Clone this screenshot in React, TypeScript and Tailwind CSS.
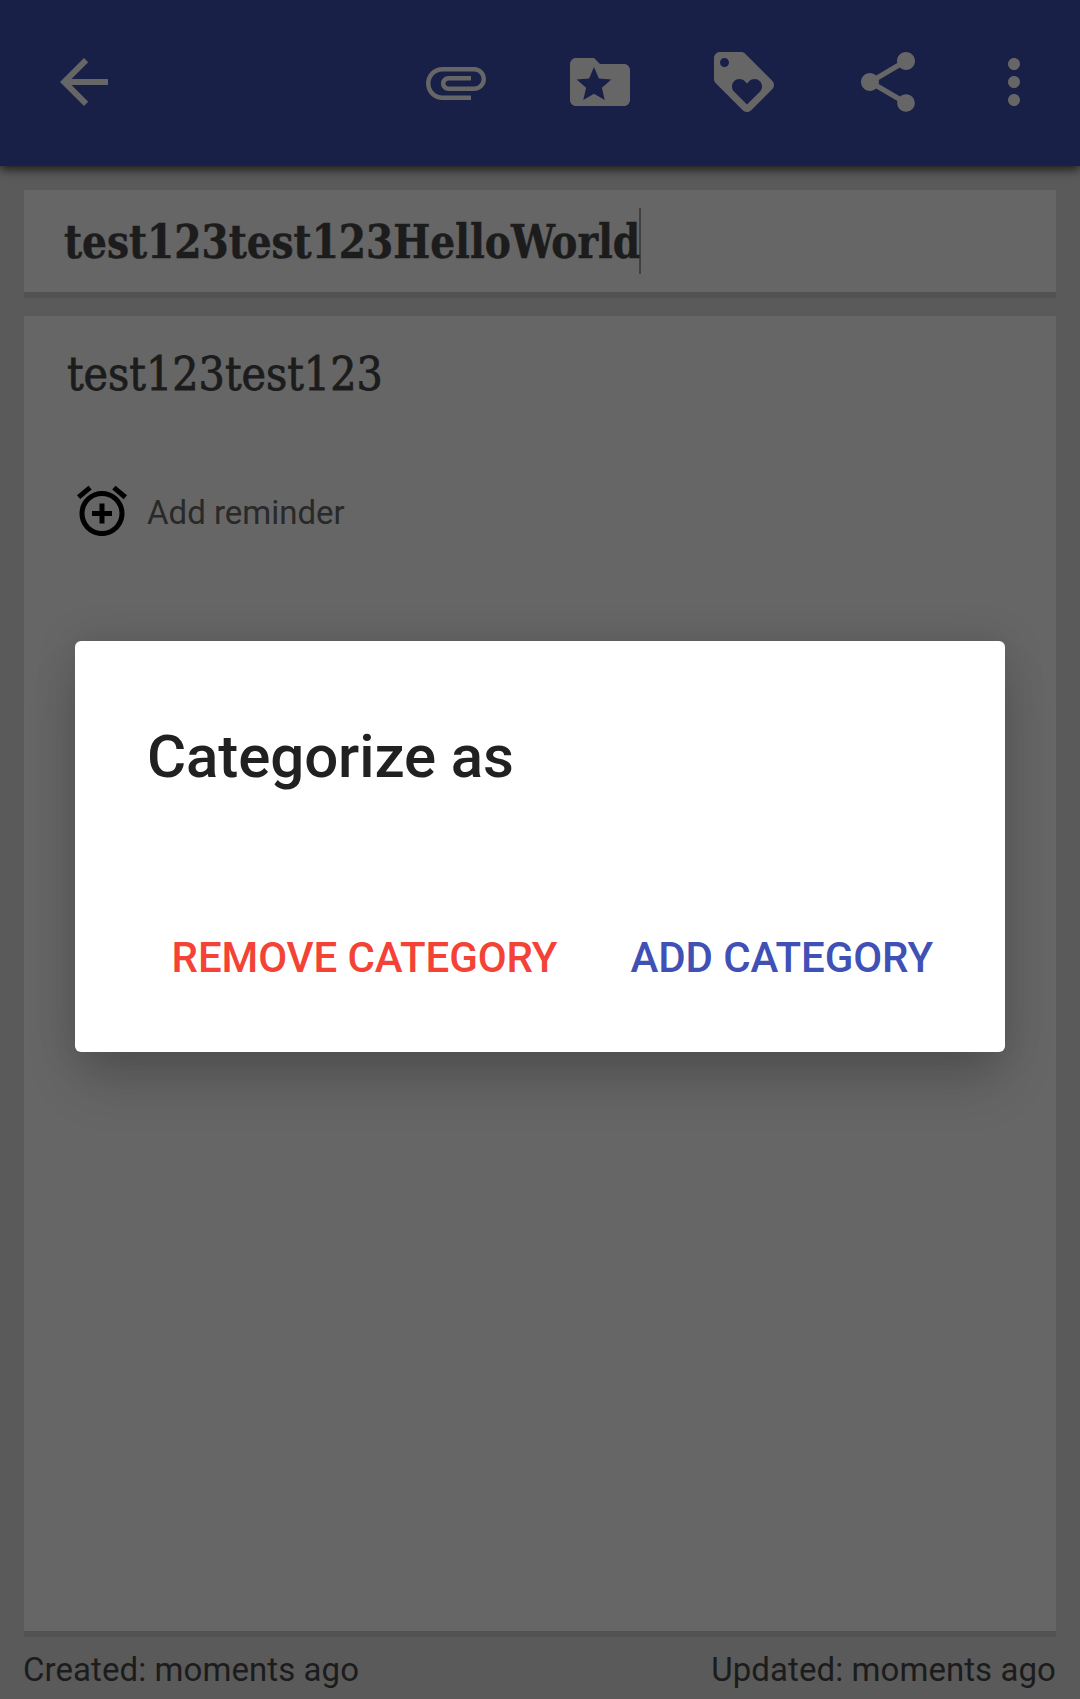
import type { ReactNode } from "react";

function Icon({ d, className }: { d: string; className: string }) {
  return (
    <svg viewBox="0 0 24 24" fill="currentColor" className={className} aria-hidden="true">
      <path d={d} />
    </svg>
  );
}

const icons = {
  back: "M20 11H7.83l5.59-5.59L12 4l-8 8 8 8 1.41-1.41L7.83 13H20v-2z",
  attachment:
    "M7.5 18C4.46 18 2 15.54 2 12.5S4.46 7 7.5 7H18c2.21 0 4 1.79 4 4s-1.79 4-4 4H9.5C8.12 15 7 13.88 7 12.5S8.12 10 9.5 10H17v1.5H9.5c-.55 0-1 .45-1 1s.45 1 1 1H18c1.38 0 2.5-1.12 2.5-2.5S19.38 8.5 18 8.5H7.5c-2.21 0-4 1.79-4 4s1.79 4 4 4H17V18H7.5z",
  folder:
    "M20 6h-8l-2-2H4c-1.1 0-1.99.9-1.99 2L2 18c0 1.1.9 2 2 2h16c1.1 0 2-.9 2-2V8c0-1.1-.9-2-2-2zm-6.42 12L10 15.9 6.42 18l.95-4.07-3.16-2.74 4.16-.36L10 7l1.63 3.84 4.16.36-3.16 2.74.95 4.06z",
  loyalty:
    "M21.41 11.58l-9-9C12.05 2.22 11.55 2 11 2H4c-1.1 0-2 .9-2 2v7c0 .55.22 1.05.59 1.42l9 9c.36.36.86.58 1.41.58.55 0 1.05-.22 1.41-.59l7-7c.37-.36.59-.86.59-1.41 0-.55-.23-1.06-.59-1.42zM5.5 7C4.67 7 4 6.33 4 5.5S4.67 4 5.5 4 7 4.67 7 5.5 6.33 7 5.5 7zm11.77 8.27L13 19.54l-4.27-4.27C8.28 14.81 8 14.19 8 13.5c0-1.38 1.12-2.5 2.5-2.5.69 0 1.32.28 1.77.74l.73.72.73-.73c.45-.45 1.08-.73 1.77-.73 1.38 0 2.5 1.12 2.5 2.5 0 .69-.28 1.32-.73 1.77z",
  share:
    "M18 16.08c-.76 0-1.44.3-1.96.77L8.91 12.7c.05-.23.09-.46.09-.7s-.04-.47-.09-.7l7.05-4.11c.54.5 1.25.81 2.04.81 1.66 0 3-1.34 3-3s-1.34-3-3-3-3 1.34-3 3c0 .24.04.47.09.7L8.04 9.81C7.5 9.31 6.79 9 6 9c-1.66 0-3 1.34-3 3s1.34 3 3 3c.79 0 1.5-.31 2.04-.81l7.12 4.16c-.05.21-.08.43-.08.65 0 1.61 1.31 2.92 2.92 2.92 1.61 0 2.92-1.31 2.92-2.92s-1.31-2.92-2.92-2.92z",
  more: "M12 8c1.1 0 2-.9 2-2s-.9-2-2-2-2 .9-2 2 .9 2 2 2zm0 2c-1.1 0-2 .9-2 2s.9 2 2 2 2-.9 2-2-.9-2-2-2zm0 6c-1.1 0-2 .9-2 2s.9 2 2 2 2-.9 2-2-.9-2-2-2z",
  alarm:
    "M7.88 3.39L6.6 1.86 2 5.71l1.29 1.53 4.59-3.85zM22 5.72l-4.6-3.86-1.29 1.53 4.6 3.86L22 5.72zM12 4c-4.97 0-9 4.03-9 9s4.02 9 9 9c4.97 0 9-4.03 9-9s-4.03-9-9-9zm0 16c-3.87 0-7-3.13-7-7s3.13-7 7-7 7 3.13 7 7-3.13 7-7 7zm1-11h-2v3H8v2h3v3h2v-3h3v-2h-3V9z",
};

function ActionButton({ label, d }: { label: string; d: string }) {
  return (
    <button aria-label={label} className="flex">
      <Icon d={d} className="size-[72px]" />
    </button>
  );
}

function Toolbar() {
  return (
    <header className="z-10 flex h-[166px] shrink-0 items-center justify-between bg-[#192048] pb-0.5 pl-12 pr-[30px] text-[#666666] shadow-[0_4px_9px_rgba(0,0,0,0.65)]">
      <ActionButton label="Back" d={icons.back} />
      <div className="flex items-center">
        <div className="flex gap-[72px]">
          <ActionButton label="Attach" d={icons.attachment} />
          <ActionButton label="Category" d={icons.folder} />
          <ActionButton label="Tag" d={icons.loyalty} />
          <ActionButton label="Share" d={icons.share} />
        </div>
        <div className="ml-[54px] flex">
          <ActionButton label="More" d={icons.more} />
        </div>
      </div>
    </header>
  );
}

function Card({ className, children }: { className: string; children: ReactNode }) {
  return <section className={`border-b-[6px] border-[#525252] bg-[#666666] ${className}`}>{children}</section>;
}

function CategoryDialog() {
  return (
    <div
      role="dialog"
      className="absolute left-[75px] top-[641px] z-20 flex h-[411px] w-[930px] flex-col justify-between rounded-md bg-white pb-[64px] pl-[72px] pr-[72px] pt-[81px] shadow-[0_34px_50px_-6px_rgba(0,0,0,0.18),0_0_42px_rgba(0,0,0,0.13)]"
    >
      <h2 className="text-[60px] font-medium leading-[70px] tracking-[-0.1px] text-[#212121]">Categorize as</h2>
      <div className="flex justify-end gap-[73px] text-[42px] font-medium leading-[60px] tracking-[-0.1px]">
        <button className="text-[#f44336]">REMOVE CATEGORY</button>
        <button className="text-[#3f51b5]">ADD CATEGORY</button>
      </div>
    </div>
  );
}

export default function App() {
  return (
    <div className="relative flex h-[1699px] w-[1080px] flex-col overflow-hidden bg-[#5a5a5a] font-['Roboto',sans-serif] text-[#1c1c1c]">
      <Toolbar />
      <main className="flex flex-1 flex-col gap-[18px] px-6 pt-6">
        <Card className="flex h-[108px] items-center pl-10">
          <div className="flex h-[66px] w-[577px] items-center border-r-2 border-[#404040]">
            <span className="origin-left scale-x-[0.945] whitespace-nowrap pt-[2px] font-['DejaVu_Serif_Condensed','DejaVu_Serif',serif] text-[46px] font-bold leading-[60px] [-webkit-text-stroke:0.5px_#1c1c1c]">
              test123test123HelloWorld
            </span>
          </div>
        </Card>
        <Card className="flex-1 pl-[43px] pt-[28px]">
          <p className="whitespace-nowrap font-['DejaVu_Serif_Condensed','DejaVu_Serif',serif] text-[46px] leading-[60px] [-webkit-text-stroke:0.8px_#1c1c1c]">
            test123test123
          </p>
          <div className="mt-[77px] flex h-[60px] items-center gap-[15px] pl-[5px]">
            <Icon d={icons.alarm} className="size-[60px] text-black" />
            <span className="pt-[3px] text-[33px] leading-10 text-[#292929]">Add reminder</span>
          </div>
        </Card>
      </main>
      <footer className="flex h-[62px] shrink-0 items-center justify-between pl-[23px] pr-6 pt-1 text-[33px] leading-10 tracking-[0.07px]">
        <span>Created: moments ago</span>
        <span>Updated: moments ago</span>
      </footer>
      <CategoryDialog />
    </div>
  );
}
